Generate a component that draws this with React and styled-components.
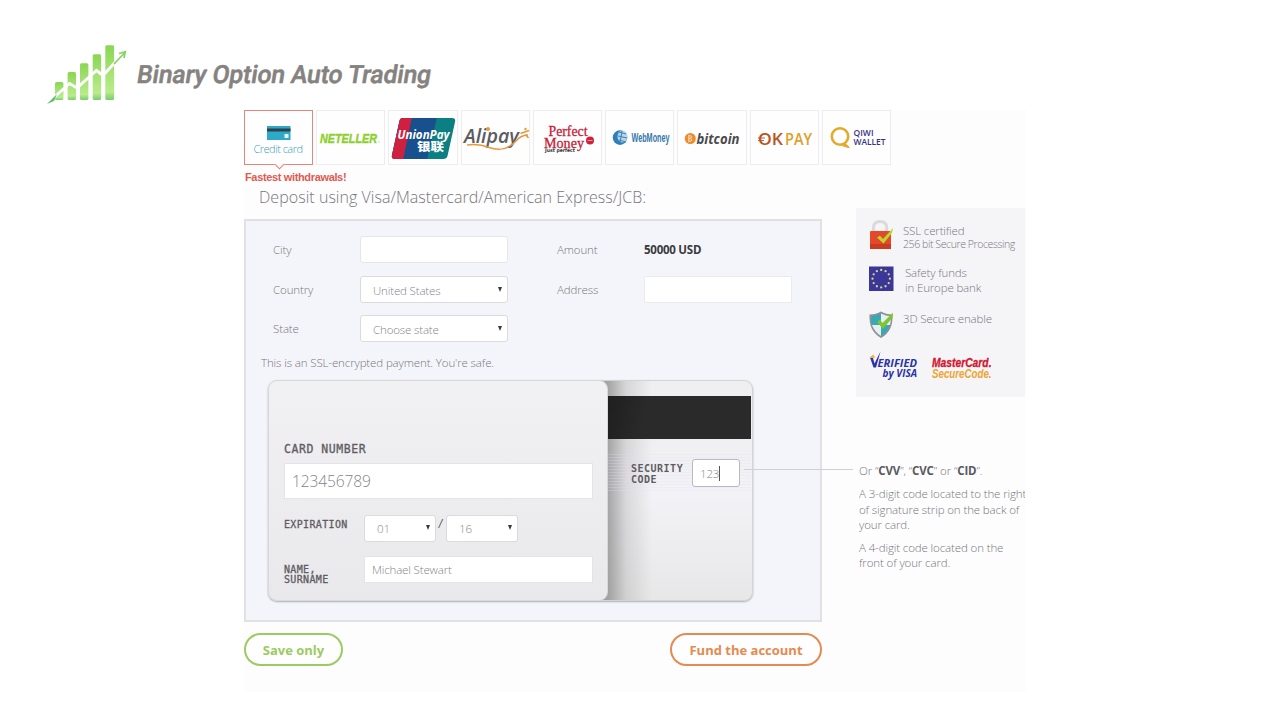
import React from 'react'
import styled, { createGlobalStyle } from 'styled-components'

const GlobalStyle = createGlobalStyle`
  * {
    box-sizing: border-box;
  }
  body {
    margin: 0;
    background: #fff;
    font-family: 'Open Sans', sans-serif;
    font-weight: 300;
    color: #77777c;
  }
`

const Page = styled.div`
  width: 1280px;
  height: 720px;
  padding-left: 244px;
  background: #fff;
  overflow: hidden;
`

const Brand = styled.header`
  height: 110px;
  margin-left: -204px;
  padding-top: 36px;
`

const Content = styled.div`
  width: 782px;
  height: 582px;
  background: #fdfdfe;
`

const Tabs = styled.nav`
  display: grid;
  grid-template-columns: repeat(9, 1fr);
  column-gap: 3px;
  width: 647px;
  height: 54px;
`

const Tab = styled.div`
  position: relative;
  border: 1px solid ${props => props.$active ? '#e2877a' : '#ededf0'};
  background: #fefefe;

  svg {
    display: block;
    width: 67px;
    height: 53px;
    overflow: visible;
  }
`

const Notch = styled.span`
  position: absolute;
  left: 31px;
  bottom: -4px;
  width: 7px;
  height: 7px;
  border: solid #e2877a;
  border-width: 0 1px 1px 0;
  background: #fefefe;
  transform: rotate(45deg);
`

const Hint = styled.div`
  height: 20px;
  padding: 6px 0 0 1px;
  font: bold 11px/14px 'Liberation Sans', sans-serif;
  letter-spacing: -0.35px;
  color: #e05a50;
`

const Title = styled.h1`
  margin: 0;
  padding: 1px 0 0 15px;
  height: 35px;
  font-size: 16px;
  font-weight: 300;
  line-height: 24px;
  letter-spacing: 0.04px;
`

const Columns = styled.div`
  display: flex;
`

const Form = styled.section`
  position: relative;
  width: 578px;
  height: 403px;
  border: 2px solid #e0e0e5;
  background: #f4f5fa;
`

const Fields = styled.div`
  display: grid;
  grid-template-columns: 87px 197px 87px 149px;
  grid-template-rows: 40px 39px 27px;
  padding: 15px 0 0 27px;
`

const Label = styled.label`
  font-size: 11.5px;
  line-height: 28px;
  letter-spacing: -0.12px;
`

const Amount = styled.strong`
  font-size: 11.5px;
  font-weight: 700;
  line-height: 28px;
  letter-spacing: -0.25px;
  color: #3a3a3d;
`

const Field = styled.div`
  display: flex;
  align-items: center;
  justify-content: space-between;
  width: ${props => props.width || 148}px;
  height: ${props => props.height || 27}px;
  padding: 1px 5px 0 ${props => props.$indent || 12}px;
  border: 1px solid ${props => props.$edge || '#dadadf'};
  border-radius: ${props => props.$square ? 0 : 3}px;
  background: #fff;
  font-size: ${props => props.$size || 11.5}px;
  letter-spacing: -0.15px;
  color: #85858a;
`

const Caret = styled.span`
  border: solid transparent;
  border-width: 5px 2.5px 0;
  border-top-color: #3a3a3a;
  margin-top: -2px;
`

const Note = styled.p`
  margin: 13px 0 0 15px;
  font-size: 11.5px;
  line-height: 16px;
  letter-spacing: -0.12px;
`

const Card = styled.div`
  display: flex;
  width: 485px;
  height: 221px;
  margin: 9px 0 0 22px;
  border-radius: 9px;
  background: #e9e9eb;
  box-shadow: 0 1px 2px #adadb1;
`

const Front = styled.div`
  width: 340px;
  padding: 63px 14px 0 15px;
  border: 1px solid #d8d8db;
  border-radius: 9px;
  background: linear-gradient(#f1f0f3, #e9e8eb);
  z-index: 1;
`

const Back = styled.div`
  flex: 1;
  margin-left: -8px;
  padding: 15px 1px 0 8px;
  border: 1px solid #d3d3d5;
  border-left: 0;
  border-radius: 0 9px 9px 0;
  background: linear-gradient(90deg, rgba(90, 90, 90, 0.5) 8px, rgba(140, 140, 140, 0.25) 26px, transparent 52px),
    linear-gradient(#efeff1 58px, #f3f3f7 110px, #e7e7e8);
`

const Magstripe = styled.div`
  height: 43px;
  background: linear-gradient(100deg, #201f20, #2b2a2b 40px);
`

const Signature = styled.div`
  display: flex;
  height: 39px;
  margin-top: 15px;
  padding: 5px 0 0 23px;
  background: repeating-linear-gradient(rgba(225, 222, 242, 0.28) 0 1px, transparent 1px 3px);
`

const Embossed = styled.span`
  display: block;
  width: ${props => props.width || 'auto'};
  padding-top: ${props => props.$drop || 0}px;
  font-family: 'DejaVu Sans Mono', monospace;
  font-size: ${props => props.$size || 10}px;
  font-weight: ${props => props.$bold ? 700 : 400};
  line-height: 10.5px;
  letter-spacing: ${props => props.$spacing || '0.35px'};
  color: #5f5d62;
  -webkit-text-stroke: ${props => props.$bold ? 0 : 0.3}px #5f5d62;
`

const CardRow = styled.div`
  display: flex;
  align-items: flex-start;
  height: ${props => props.height}px;
  margin-top: ${props => props.$top}px;
`

const Slash = styled.span`
  width: 10px;
  padding-left: 2px;
  font: italic 10px/18px 'DejaVu Sans Mono', monospace;
  color: #555;
`

const Cursor = styled.span`
  width: 1px;
  height: 15px;
  margin-right: auto;
  background: #555;
`

const Pointer = styled.div`
  position: absolute;
  left: 498px;
  top: 248px;
  width: 109px;
  height: 1px;
  background: #cfcfd4;
`

const Side = styled.aside`
  width: 169px;
  margin: -11px 0 0 34px;
`

const Trust = styled.div`
  height: 189px;
  padding-top: 11px;
  background: #f5f5f8;
`

const TrustRow = styled.div`
  display: flex;
  height: ${props => props.height}px;

  svg {
    flex: none;
    width: 28px;
    height: 32px;
    margin-left: 10px;
  }
`

const TrustText = styled.div`
  margin-left: ${props => props.$left}px;
  padding-top: ${props => props.$top}px;
  font-size: 11.5px;
  line-height: 14.5px;
  letter-spacing: -0.15px;
  white-space: nowrap;

  small {
    display: block;
    font-size: 10.5px;
    line-height: 11px;
    letter-spacing: -0.4px;
  }
`

const Seals = styled.svg`
  display: block;
  width: 169px;
  height: 35px;
`

const Help = styled.div`
  width: 166px;
  margin: 66px 0 0 3px;
  overflow: hidden;
  font-size: 11.5px;
  line-height: 15.3px;
  white-space: nowrap;

  p {
    margin: 0 0 8px;
    letter-spacing: -0.12px;
  }
  b {
    font-weight: 700;
    color: #5a5a5f;
  }
`

const Actions = styled.footer`
  display: flex;
  justify-content: space-between;
  width: 578px;
  margin-top: 11px;
`

const Button = styled.button`
  width: ${props => props.width}px;
  height: 33px;
  padding: 0;
  border: 2px solid ${props => props.$tone};
  border-radius: 17px;
  background: #fefefe;
  color: ${props => props.$tone};
  font: 700 13px 'Open Sans', sans-serif;
`

const BrandLogo = () => (
  <svg width="600" height="74" viewBox="40 36 600 74">
    <defs>
      <linearGradient id="bar" x1="0" y1="0" x2="0" y2="1">
        <stop offset="0" stopColor="#8ad653" />
        <stop offset="0.85" stopColor="#b9ec8c" />
        <stop offset="1" stopColor="#7acd6c" />
      </linearGradient>
    </defs>
    <g fill="url(#bar)">
      <rect x="55" y="82" width="8.4" height="18" rx="1.5" />
      <rect x="67.6" y="72" width="8.4" height="28" rx="1.5" />
      <rect x="80" y="63.3" width="8.4" height="36.7" rx="1.5" />
      <rect x="92.7" y="54.3" width="8.4" height="45.7" rx="1.5" />
      <rect x="105.3" y="45.3" width="8.8" height="54.7" rx="1.5" />
    </g>
    <path d="M50 101 L69.5 83.5 L77 88 L96.5 70.5 L103 75.5 L120 57" fill="none" stroke="#fff" strokeWidth="3" />
    <path d="M47 104 L57 94 L54 101 Z" fill="#58c070" />
    <path d="M114 64 L124.5 53 M119 53.5 L125.3 51.8 L124 58" fill="none" stroke="#86d45e" strokeWidth="1.7" />
    <text x="0" y="0" transform="translate(136 83) skewX(-9)" textLength="294" lengthAdjust="spacingAndGlyphs" fontFamily="Roboto, sans-serif" fontSize="25" fontWeight="500" fill="#85827f" stroke="#85827f" strokeWidth="0.6" strokeLinejoin="round">Binary Option Auto Trading</text>
  </svg>
)

const CreditCard = () => (
  <svg viewBox="245 111 67 53">
    <rect x="267" y="126" width="23.5" height="14" fill="#2fa9c8" />
    <rect x="267" y="128.5" width="23.5" height="3" fill="#2a4350" />
    <rect x="284.5" y="134" width="4" height="4" fill="#e3f4f9" />
    <text x="253.500" y="152.500" textLength="49.500" fontSize="11" fontWeight="300" fill="#3c9fb8">Credit card</text>
  </svg>
)

const Neteller = () => (
  <svg viewBox="317 111 67 53">
    <text x="320" y="143" textLength="57" lengthAdjust="spacingAndGlyphs" fontFamily="'Liberation Sans', sans-serif" fontSize="13" fontWeight="700" fontStyle="italic" fill="#8dd02e" stroke="#8dd02e" strokeWidth="0.4">NETELLER</text>
    <circle cx="379" cy="142" r="0.7" fill="#b6dd85" />
  </svg>
)

const UnionPay = () => (
  <svg viewBox="389 111 67 53">
    <defs>
      <clipPath id="up">
        <path d="M403 118 H452 Q456 118 455 122 L447.5 156 Q446.7 159 443 159 H395 Q391 159 392 155 L399.5 121 Q400 118 403 118 Z" />
      </clipPath>
    </defs>
    <g clipPath="url(#up)">
      <rect x="390" y="117" width="67" height="43" fill="#0b7f82" />
      <path d="M390 117 H437 L427 160 H390 Z" fill="#17508c" />
      <path d="M390 117 H412 L403 160 H390 Z" fill="#d0203f" />
    </g>
    <text x="397.5" y="139" textLength="52" lengthAdjust="spacingAndGlyphs" fontSize="13" fontWeight="700" fontStyle="italic" fill="#fff">UnionPay</text>
    <text x="417" y="150.500" textLength="27" lengthAdjust="spacingAndGlyphs" fontFamily="'Noto Sans CJK SC', sans-serif" fontSize="11.5" fontWeight="900" fill="#fff">银联</text>
  </svg>
)

const Alipay = () => (
  <svg viewBox="461 111 67 53">
    <text x="463" y="143" textLength="55" lengthAdjust="spacingAndGlyphs" fontSize="19" fontWeight="600" fontStyle="italic" fill="#5c5b60">Alipay</text>
    <circle cx="487" cy="129" r="2" fill="#e8983c" />
    <path d="M466 145 Q478 143.500 488 147.500 Q504 153 515 141 Q519 135.500 527 135" fill="none" stroke="#e8983c" strokeWidth="1.5" />
    <path d="M519.5 133.500 L528 130.500 M524.5 134.500 L527.5 138" stroke="#e8983c" strokeWidth="1.500" />
    <circle cx="524.5" cy="129" r="1.2" fill="#e8983c" />
  </svg>
)

const PerfectMoney = () => (
  <svg viewBox="533 111 67 53">
    <g fontFamily="'Liberation Serif', serif" fill="#c52038" stroke="#c52038" strokeWidth="0.3">
      <text x="547.5" y="135.700" textLength="39" lengthAdjust="spacingAndGlyphs" fontSize="15">Perfect</text>
      <text x="543" y="148" textLength="40" lengthAdjust="spacingAndGlyphs" fontSize="15">Money</text>
    </g>
    <circle cx="589" cy="140.5" r="4" fill="#d0203a" />
    <path d="M586.5 140.5 H591.5" stroke="#f2a6b0" strokeWidth="0.9" />
    <text x="544" y="152.300" textLength="30" lengthAdjust="spacingAndGlyphs" fontFamily="'DejaVu Sans', sans-serif" fontSize="5" fontWeight="700" fill="#333">Just perfect</text>
  </svg>
)

const WebMoney = () => (
  <svg viewBox="605 111 67 53">
    <circle cx="619" cy="137.6" r="7.3" fill="#2f7fb8" />
    <ellipse cx="621.5" cy="136.5" rx="5" ry="6" fill="#b7d6ea" />
    <path d="M618 132 L625 134 M617 136 L626 138 M618 140 L625 142 M621 131 L619 143" stroke="#3f86ba" strokeWidth="1.1" />
    <text x="630.5" y="142.300" textLength="38" lengthAdjust="spacingAndGlyphs" fontFamily="'Liberation Sans', sans-serif" fontSize="12.5" fontWeight="700" fill="#3577ab">WebMoney</text>
  </svg>
)

const Bitcoin = () => (
  <svg viewBox="677 111 67 53">
    <circle cx="689.3" cy="138.5" r="5.5" fill="#ee8c2d" />
    <path d="M687.8 135.5 V141.500 M687.5 135.700 H689.8 Q691.5 137 689.5 138.400 Q692.5 140 689.8 141.300 H687.5 M688 138.400 H690" fill="none" stroke="#fbe3c8" strokeWidth="1" />
    <text x="695.5" y="143.800" textLength="43" lengthAdjust="spacingAndGlyphs" fontSize="15" fontWeight="700" fontStyle="italic" fill="#4b4b4e">bitcoin</text>
  </svg>
)

const OkPay = () => (
  <svg viewBox="750 111 67 53">
    <text x="757" y="144.500" textLength="25" lengthAdjust="spacingAndGlyphs" fontSize="15.500" fontWeight="600" fill="#bb5424">OK</text>
    <text x="784" y="144.500" textLength="27" lengthAdjust="spacingAndGlyphs" fontSize="15.500" fontWeight="600" fill="#dfa02c">PAY</text>
    <path d="M757 138 H764 M757 140.500 H763" stroke="#bb5424" strokeWidth="0.9" />
  </svg>
)

const Qiwi = () => (
  <svg viewBox="822 111 67 53">
    <circle cx="839" cy="136.5" r="8.2" fill="none" stroke="#e3ab2c" strokeWidth="2.6" />
    <path d="M841 143 Q846 143 849 148 Q843 147.500 840 145 Z" fill="#e3ab2c" />
    <g fontWeight="600" fontSize="8.2" fill="#3a3385">
      <text x="852.5" y="136" textLength="20" lengthAdjust="spacingAndGlyphs">QIWI</text>
      <text x="852.5" y="144.800" textLength="32" lengthAdjust="spacingAndGlyphs">WALLET</text>
    </g>
  </svg>
)

const Lock = () => (
  <svg viewBox="866 219 28 32">
    <path d="M873.5 232 V227.5 Q873.5 221.5 880 221.5 Q886.7 221.5 886.7 227.5 V232" fill="none" stroke="#dad9dd" strokeWidth="3" />
    <rect x="870" y="231" width="21" height="18" rx="1" fill="#e2492a" />
    <path d="M870 244 H891 V249 H870 Z" fill="#c93c20" />
    <path d="M877 237.5 L880 235.8 L883 239 L893 228 L892 233 L883.5 243.5 Z" fill="#bfd52f" />
  </svg>
)

const stars = Array.from({ length: 12 }, (_, i) => i * 30 * Math.PI / 180)

const Europe = () => (
  <svg viewBox="866 263 28 32">
    <rect x="869" y="266.5" width="24.5" height="24.5" fill="#3a3798" />
    {stars.map(a => (
      <circle key={a} cx={881.2 + 8.7 * Math.cos(a)} cy={278.7 + 8.7 * Math.sin(a)} r="1.15" fill="#d8d48a" />
    ))}
  </svg>
)

const Shield = () => (
  <svg viewBox="866 308 28 32">
    <path d="M881 311.5 Q886 314.5 892.5 314.5 Q893.5 331 881 338 Q868.5 331 869.5 314.5 Q876 314.5 881 311.5 Z" fill="#8c9295" />
    <path d="M881 313.5 Q876 316 871.3 316.3 Q871 321 872 325 H881 Z" fill="#35a9b8" />
    <path d="M881 313.5 Q886 316 890.7 316.3 Q891 321 890 325 H881 Z" fill="#e8eff0" />
    <path d="M872 325 H881 V336 Q874.5 332 872 325 Z" fill="#e8eff0" />
    <path d="M890 325 H881 V336 Q887.5 332 890 325 Z" fill="#35a9b8" />
    <path d="M877 322 L880 319.5 L882.5 323 L893 312.5 L892.5 317.5 L883 329 Z" fill="#7fc531" />
  </svg>
)

const SealLogos = () => (
  <Seals viewBox="856 350 169 35">
    <g fontStyle="italic" fontWeight="700" fill="#2a33a8">
      <path d="M870 357.5 L873 358 L874.5 363.5 L880.5 351.5 L876 367.5 H873.5 Z" />
      <path d="M869.5 357.5 L873.5 354.500 L875 358 Z" fill="#eeb03c" />
      <text x="877.5" y="367.300" textLength="39.500" lengthAdjust="spacingAndGlyphs" fontSize="11">ERIFIED</text>
      <text x="882.5" y="376.500" textLength="34.500" lengthAdjust="spacingAndGlyphs" fontSize="10">by VISA</text>
    </g>
    <g fontFamily="'Liberation Sans', sans-serif" fontStyle="italic" fontWeight="700" fontSize="12">
      <text x="932" y="366.500" textLength="59.500" lengthAdjust="spacingAndGlyphs" fill="#d3162f" stroke="#d3162f" strokeWidth="0.3">MasterCard.</text>
      <text x="932" y="377.500" textLength="59.500" lengthAdjust="spacingAndGlyphs" fill="#eda32f">SecureCode.</text>
    </g>
  </Seals>
)

const methods = [CreditCard, Neteller, UnionPay, Alipay, PerfectMoney, WebMoney, Bitcoin, OkPay, Qiwi]

const Select = ({ children, ...rest }) => (
  <Field {...rest}>
    {children}
    <Caret />
  </Field>
)

const App = () => {
  return (
    <Page>
      <GlobalStyle />
      <Brand>
        <BrandLogo />
      </Brand>
      <Content>
        <Tabs>
          {methods.map((Logo, i) => (
            <Tab key={i} $active={i === 0}>
              {i === 0 && <Notch />}
              <Logo />
            </Tab>
          ))}
        </Tabs>
        <Hint>Fastest withdrawals!</Hint>
        <Title>Deposit using Visa/Mastercard/American Express/JCB:</Title>
        <Columns>
          <Form>
            <Fields>
              <Label>City</Label>
              <Field $edge="#e6e6ea" />
              <Label>Amount</Label>
              <Amount>50000 USD</Amount>
              <Label>Country</Label>
              <Select>United States</Select>
              <Label>Address</Label>
              <Field $edge="#ebebef" $square />
              <Label>State</Label>
              <Select>Choose state</Select>
            </Fields>
            <Note>This is an SSL-encrypted payment. You're safe.</Note>
            <Card>
              <Front>
                <Embossed $size={11.5} $spacing="0.55px">CARD NUMBER</Embossed>
                <CardRow $top={8} height={36}>
                  <Field width={309} height={36} $indent={7} $size={15.6} $edge="#e4e3e6" $square>123456789</Field>
                </CardRow>
                <CardRow $top={16} height={27}>
                  <Embossed width="80px" $drop={5}>EXPIRATION</Embossed>
                  <Select width={72}>01</Select>
                  <Slash>/</Slash>
                  <Select width={72}>16</Select>
                </CardRow>
                <CardRow $top={14} height={27}>
                  <Embossed width="80px" $drop={9}>NAME,<br />SURNAME</Embossed>
                  <Field width={229} $indent={7} $edge="#e4e3e6" $square>Michael Stewart</Field>
                </CardRow>
              </Front>
              <Back>
                <Magstripe />
                <Signature>
                  <Embossed width="61px" $bold $drop={5} $spacing="0.5px">SECURITY<br />CODE</Embossed>
                  <Field width={48} height={28} $indent={7} $edge="#b9b8c4">123<Cursor /></Field>
                </Signature>
              </Back>
            </Card>
            <Pointer />
          </Form>
          <Side>
            <Trust>
              <TrustRow height={44}>
                <Lock />
                <TrustText $left={9} $top={5}>SSL certified<small>256 bit Secure Processing</small></TrustText>
              </TrustRow>
              <TrustRow height={45}>
                <Europe />
                <TrustText $left={11} $top={3}>Safety funds<br />in Europe bank</TrustText>
              </TrustRow>
              <TrustRow height={42}>
                <Shield />
                <TrustText $left={9} $top={4}>3D Secure enable</TrustText>
              </TrustRow>
              <SealLogos />
            </Trust>
            <Help>
              <p>Or “<b>CVV</b>”, “<b>CVC</b>” or “<b>CID</b>”.</p>
              <p>A 3-digit code located to the right<br />of signature strip on the back of<br />your card.</p>
              <p>A 4-digit code located on the<br />front of your card.</p>
            </Help>
          </Side>
        </Columns>
        <Actions>
          <Button width={99} $tone="#9ccb62">Save only</Button>
          <Button width={152} $tone="#e58a50">Fund the account</Button>
        </Actions>
      </Content>
    </Page>
  )
}

export default App
